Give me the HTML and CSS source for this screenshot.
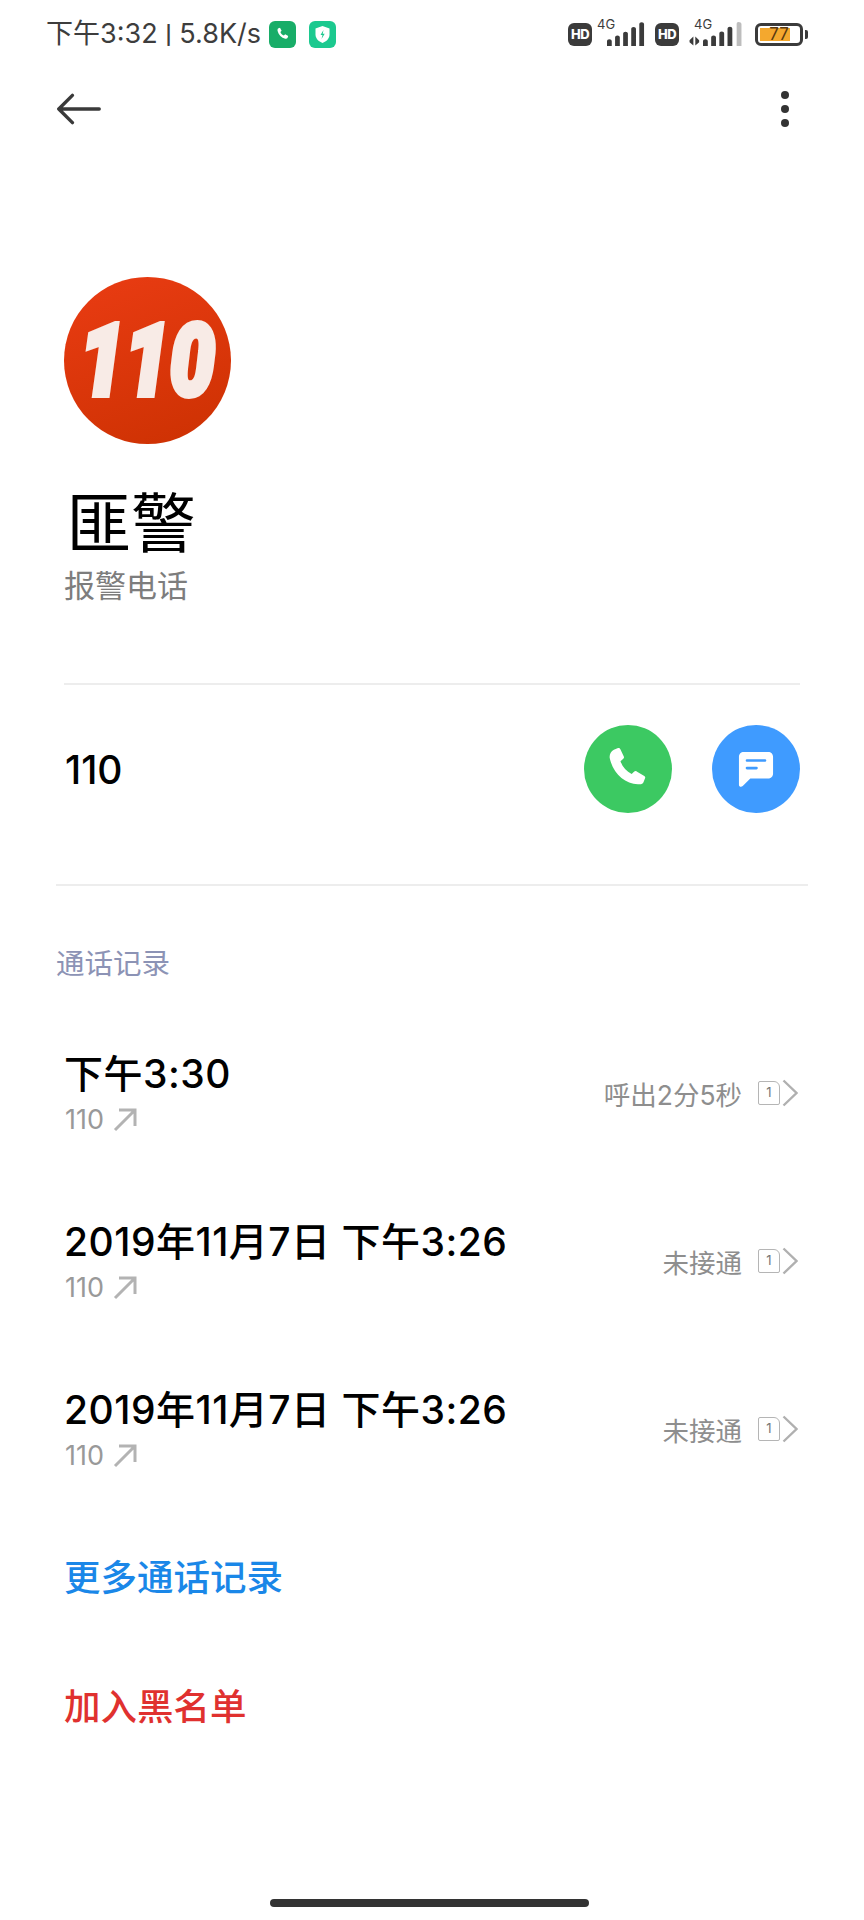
FILE: index.html
```html
<!DOCTYPE html>
<html lang="zh">
<head>
<meta charset="utf-8">
<title>匪警</title>
<link rel="stylesheet" href="styles.css">
</head>
<body>
<div class="screen">
  <header class="status">
    <div class="status-left">
      <span class="status-text">下午3:32 <span class="pipe">|</span> 5.8K/s</span>
      <svg class="app-icon" viewBox="0 0 27 27"><rect width="27" height="27" rx="6" fill="#18ad68"/><path d="M9 7.500l2-.8 1.600 3-1.200 1.200c.6 1.600 1.900 3 3.500 3.600l1.300-1.200 3 1.700-.7 2c-.4.7-1.400.9-2.200.7-3.900-1-6.700-3.900-7.700-7.800-.2-.9 0-1.900.4-2.400z" fill="#fff"/></svg>
      <svg class="app-icon shield" viewBox="0 0 27 27"><rect width="27" height="27" rx="6" fill="#1cc98f"/><path d="M13.500 5l7 2.500v6c0 4-3 7-7 8.500-4-1.500-7-4.500-7-8.500v-6z" fill="#fff"/><path d="M14.500 9l-3 5h2l-1 4 3.200-5.300h-2z" fill="#1cc98f"/></svg>
    </div>
    <div class="status-right">
      <span class="hd">HD</span>
      <div class="signal-wrap">
        <span class="net">4G</span>
        <svg class="signal" viewBox="0 0 40 26"><path d="M0 20c0-1 1-2 2.500-2S5 19 5 20v5H0zM8.500 16c0-1 1-2 2.500-2s2.500 1 2.500 2v9h-5zM17 12c0-1 1-2 2.500-2s2.500 1 2.500 2v13h-5zM25.500 7c0-1 1-2 2.500-2s2.500 1 2.500 2v18h-5zM34 2c0-1 1-2 2.500-2S39 1 39 2v23h-5z" fill="#3b3b3b"/></svg>
      </div>
      <span class="hd hd-second">HD</span>
      <div class="signal-wrap wide">
        <span class="net">4G</span>
        <svg class="signal" viewBox="0 0 54 26"><path d="M0 19l4-4v9.500L0 21zM6 15l4 4v2l-4 3.500z" fill="#3b3b3b"/><path d="M14 20c0-1 1-2 2.500-2s2.500 1 2.500 2v5h-5zM22.500 16c0-1 1-2 2.500-2s2.500 1 2.500 2v9h-5zM31 12c0-1 1-2 2.500-2s2.500 1 2.500 2v13h-5zM39.500 7c0-1 1-2 2.500-2s2.500 1 2.500 2v18h-5z" fill="#3b3b3b"/><path d="M49 2c0-1 .5-2 2-2s3 1 3 2v23h-5z" fill="#bdbdbd"/></svg>
      </div>
      <div class="battery">
        <div class="battery-body"><div class="battery-fill"></div><span class="battery-num">77</span></div>
        <div class="battery-cap"></div>
      </div>
    </div>
  </header>

  <nav class="toolbar">
    <svg class="back" viewBox="0 0 48 34"><path d="M2.500 17h43M17 2.500L2.500 17 17 31.500" fill="none" stroke="#3a3a3a" stroke-width="3.600" stroke-linecap="round" stroke-linejoin="round"/></svg>
    <svg class="more" viewBox="0 0 8 36"><circle cx="4" cy="4" r="4" fill="#333"/><circle cx="4" cy="18" r="4" fill="#333"/><circle cx="4" cy="32" r="4" fill="#333"/></svg>
  </nav>

  <section class="profile">
    <div class="avatar"><span class="avatar-num">110</span></div>
    <h1 class="name">匪警</h1>
    <p class="label">报警电话</p>
  </section>

  <section class="number-row">
    <span class="number">110</span>
    <div class="actions">
      <button class="action green">
        <svg viewBox="0 0 44 44"><path d="M8.500 3.500l4-1.500c1-.3 1.800.1 2.200 1l3.300 7c.4.900.2 1.600-.5 2.200l-2.700 2.300c1.700 5.200 5.700 9.700 10.700 12.300l2.500-2.300c.7-.6 1.500-.7 2.300-.2l7.300 4.300c.8.500 1.100 1.200.8 2.100l-1.600 3.900c-.8 1.700-2.600 2.300-4.500 1.900C19.500 37 7.500 26 4.500 11.500c-.4-3.300 1-6.600 4-8z" fill="#fff"/></svg>
      </button>
      <button class="action blue">
        <svg viewBox="0 0 38 38"><path d="M6 1h26c2.800 0 5 2.200 5 5v18c0 2.800-2.200 5-5 5H13l-8 8c-1.600 1.300-4 .8-4-1.500V6c0-2.800 2.200-5 5-5z" fill="#fff"/><path d="M9.500 10h19M9.500 18h10" stroke="#3f9bff" stroke-width="2.800" stroke-linecap="round"/></svg>
      </button>
    </div>
  </section>

  <section class="history">
    <h2 class="history-title">通话记录</h2>

    <div class="call">
      <div class="call-main">
        <div class="call-time">下午3:30</div>
        <div class="call-sub">110 <svg class="arrow" viewBox="0 0 24 24"><path d="M2 22L22 2M6 2h16v16" fill="none" stroke="#b3b3b3" stroke-width="3"/></svg></div>
      </div>
      <div class="call-side">
        <span class="call-status">呼出2分5秒</span>
        <span class="sim">1</span>
        <svg class="chev" viewBox="0 0 16 28"><path d="M1.500 1.500L14.500 14 1.500 26.500" fill="none" stroke="#b0b0b0" stroke-width="2.400"/></svg>
      </div>
    </div>

    <div class="call">
      <div class="call-main">
        <div class="call-time">2019年11月7日 下午3:26</div>
        <div class="call-sub">110 <svg class="arrow" viewBox="0 0 24 24"><path d="M2 22L22 2M6 2h16v16" fill="none" stroke="#b3b3b3" stroke-width="3"/></svg></div>
      </div>
      <div class="call-side">
        <span class="call-status">未接通</span>
        <span class="sim">1</span>
        <svg class="chev" viewBox="0 0 16 28"><path d="M1.500 1.500L14.500 14 1.500 26.500" fill="none" stroke="#b0b0b0" stroke-width="2.400"/></svg>
      </div>
    </div>

    <div class="call">
      <div class="call-main">
        <div class="call-time">2019年11月7日 下午3:26</div>
        <div class="call-sub">110 <svg class="arrow" viewBox="0 0 24 24"><path d="M2 22L22 2M6 2h16v16" fill="none" stroke="#b3b3b3" stroke-width="3"/></svg></div>
      </div>
      <div class="call-side">
        <span class="call-status">未接通</span>
        <span class="sim">1</span>
        <svg class="chev" viewBox="0 0 16 28"><path d="M1.500 1.500L14.500 14 1.500 26.500" fill="none" stroke="#b0b0b0" stroke-width="2.400"/></svg>
      </div>
    </div>
  </section>

  <a class="link more-link">更多通话记录</a>
  <a class="link block-link">加入黑名单</a>

  <div class="spacer"></div>
  <div class="home-wrap"><div class="home-bar"></div></div>
</div>
</body>
</html>
```
FILE: styles.css
```css
* { box-sizing: border-box; margin: 0; padding: 0; }
html, body { background: #fff; }
body { width: 864px; height: 1920px; overflow: hidden; font-family: Inter, "Noto Sans CJK SC", sans-serif; color: #000; }
.screen { width: 864px; height: 1920px; display: flex; flex-direction: column; }

.status { height: 68px; display: flex; justify-content: space-between; align-items: center; padding: 0 56px 0 46px; }
.status-left { display: flex; align-items: center; }
.status-text { font-size: 27px; line-height: 30px; color: #3d3d3d; }
.pipe { font-family: Roboto, sans-serif; font-weight: 700; font-size: 26px; }
.app-icon { width: 27px; height: 27px; margin-left: 8px; }
.app-icon.shield { margin-left: 13px; }
.status-right { display: flex; align-items: center; height: 30px; }
.hd { width: 24px; height: 23px; border-radius: 6px; background: #3b3b3b; color: #fff; font-size: 13px; font-weight: 800; line-height: 23px; text-align: center; letter-spacing: -0.5px; }
.hd-second { margin-left: 10px; }
.signal-wrap { width: 53px; height: 26px; position: relative; }
.signal-wrap.wide { width: 63px; }
.net { position: absolute; left: 5px; top: -3px; font-size: 13px; line-height: 13px; color: #3d3d3d; }
.wide .net { left: 15px; }
.signal { height: 25px; position: absolute; right: 0; bottom: 0; }
.signal-wrap .signal { width: 38px; }
.signal-wrap.wide .signal { width: 53px; }
.battery { display: flex; align-items: center; margin-left: 13px; }
.battery-body { width: 48px; height: 23px; border: 3px solid #3b3b3b; border-radius: 6px; padding: 2px; position: relative; display: flex; }
.battery-fill { width: 30px; background: #f4a82e; }
.battery-num { position: absolute; inset: 0; font-size: 17px; line-height: 17px; text-align: center; color: #5a3a10; }
.battery-cap { width: 3px; height: 9px; background: #3b3b3b; margin-left: 2px; border-radius: 0 2px 2px 0; }

.toolbar { height: 82px; display: flex; justify-content: space-between; align-items: center; padding: 0 75px 0 56px; }
.back { width: 46px; height: 32px; }
.more { width: 8px; height: 36px; }

.profile { padding: 127px 64px 0; }
.avatar { width: 167px; height: 167px; border-radius: 50%; background: linear-gradient(160deg, #ea3c13, #cc3102); display: flex; align-items: center; justify-content: center; }
.avatar-num { font-family: Roboto, sans-serif; font-size: 100px; line-height: 100px; font-weight: 900; font-style: italic; color: #f8ebe6; -webkit-text-stroke: 6px #f8ebe6; transform: scaleX(0.8); display: block; }
.name { font-family: "Noto Sans CJK SC", sans-serif; font-size: 65px; line-height: 64px; font-weight: 400; margin: 43px 0 0 2px; }
.label { font-family: "Noto Sans CJK SC", sans-serif; font-size: 31px; line-height: 40px; color: #7d7d7d; margin-top: 13px; }

.number-row { margin: 79px 64px 0; border-top: 2px solid #ededed; height: 201px; padding-bottom: 31px; display: flex; justify-content: space-between; align-items: center; }
.number { font-size: 39px; font-weight: 500; padding-left: 1px; }
.actions { display: flex; gap: 40px; }
.action { width: 88px; height: 88px; border: 0; border-radius: 50%; display: flex; align-items: center; justify-content: center; }
.action.green { background: #3cc962; }
.action.green svg { width: 46px; height: 46px; }
.action.blue { background: #3f9bff; }
.action.blue svg { width: 36px; height: 36px; }

.history { margin: 0 56px; border-top: 2px solid #ededed; }
.history-title { font-family: "Noto Sans CJK SC", sans-serif; font-size: 28.500px; line-height: 40px; font-weight: 400; color: #8c93b5; margin: 56px 0 27px; }
.call { height: 168px; margin-left: 9px; margin-right: 8px; display: flex; justify-content: space-between; align-items: center; }
.call-main { display: flex; flex-direction: column; gap: 4px; }
.call-time { font-size: 39px; line-height: 50px; font-weight: 500; letter-spacing: 0.5px; margin-left: -1px; }
.call-sub { font-size: 27px; line-height: 34px; color: #999; display: flex; align-items: center; gap: 9px; }
.arrow { width: 24px; height: 24px; }
.call-side { display: flex; align-items: center; }
.call-status { font-size: 26.500px; color: #8e8e8e; margin-right: 16px; }
.sim { width: 22px; height: 24px; border: 1.500px solid #b5b5b5; border-radius: 2px 6px 2px 2px; font-size: 13px; line-height: 21px; text-align: center; color: #777; margin-right: 2px; }
.chev { width: 16px; height: 28px; margin-right: 2px; }

.link { font-family: "Noto Sans CJK SC", sans-serif; font-size: 36.500px; line-height: 50px; font-weight: 500; padding-left: 64px; }
.more-link { color: #1a87e8; margin-top: 38px; }
.block-link { color: #e0312f; margin-top: 79px; }

.spacer { flex: 1; }
.home-wrap { height: 21px; display: flex; justify-content: center; padding-right: 6px; }
.home-bar { width: 319px; height: 8px; border-radius: 4px; background: #333; }
```
